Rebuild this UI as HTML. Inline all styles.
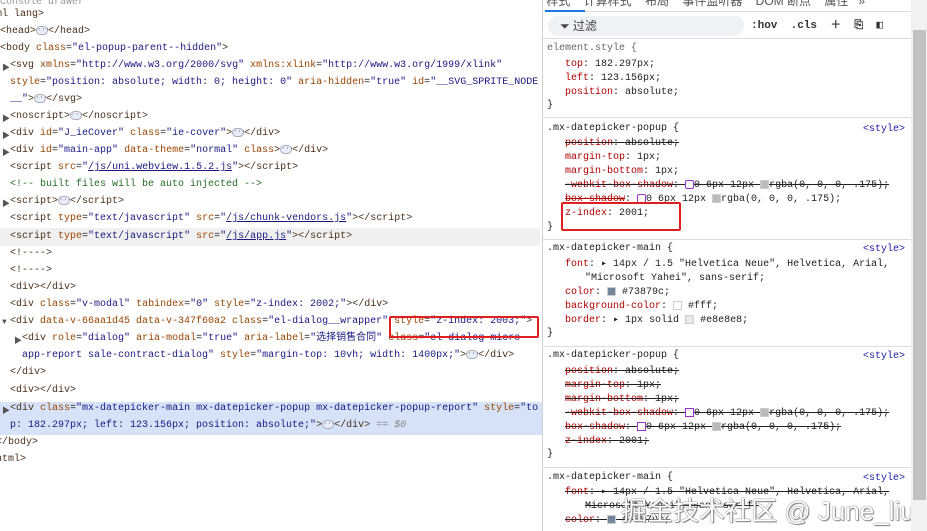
<!DOCTYPE html>
<html><head><meta charset="utf-8"><style>
*{margin:0;padding:0;box-sizing:border-box}
body{width:927px;height:531px;overflow:hidden;background:#fff;position:relative;font-family:"Liberation Mono","Noto Sans CJK SC",monospace;font-size:10px;color:#222}
.l{position:absolute;left:0;top:0;width:543px;height:531px;border-right:1px solid #d0d0d0}
.ln{position:absolute;height:17px;line-height:17px;white-space:pre}
.t{color:#4a2f18}.a{color:#994500}.v{color:#1a1a80}.c{color:#236e25}.u{color:#1a1a80;text-decoration:underline}
.tri{position:absolute;font-size:8px;color:#555}
.dots{display:inline-block;width:12px;height:9px;border:1px solid #aab;border-radius:5px;background:#e8eef8;vertical-align:middle;font-size:7px;line-height:6px;text-align:center;color:#557}
.r{position:absolute;left:543px;top:0;width:368px;height:531px}
.rl{position:absolute;left:4px;height:14px;line-height:14px;white-space:pre}
.p{color:#b00000}.s{text-decoration:line-through}
.sep{position:absolute;left:0;width:368px;height:1px;background:#ddd}
.src{position:absolute;right:6px;color:#1a1aa6}
.sw{display:inline-block;width:9px;height:9px;vertical-align:middle;border:1px solid #ccc}
.box{position:absolute;border:2px solid #e02020;border-radius:2px}
</style></head><body>
<div class="l">
<div class="ln" style="top:-6px;left:0;color:#999">Console drawer</div>
<div class="ln t" style="top:6px;left:-4px">ml lang&gt;</div>
<div class="ln t" style="top:23px;left:0">&lt;head&gt;<span class="dots">···</span>&lt;/head&gt;</div>
<div class="ln" style="top:40px;left:0"><span class="t">&lt;body </span><span class="a">class</span>=<span class="v">"el-popup-parent--hidden"</span><span class="t">&gt;</span></div>
<div class="tri" style="top:62px;left:2px">▶</div>
<div class="ln" style="top:57px;left:10px"><span class="t">&lt;svg </span><span class="a">xmlns</span>=<span class="v">"http://www.w3.org/2000/svg"</span> <span class="a">xmlns:xlink</span>=<span class="v">"http://www.w3.org/1999/xlink"</span></div>
<div class="ln" style="top:74px;left:10px"><span class="a">style</span>=<span class="v">"position: absolute; width: 0; height: 0"</span> <span class="a">aria-hidden</span>=<span class="v">"true"</span> <span class="a">id</span>=<span class="v">"__SVG_SPRITE_NODE</span></div>
<div class="ln" style="top:91px;left:10px"><span class="v">__"</span><span class="t">&gt;</span><span class="dots">···</span><span class="t">&lt;/svg&gt;</span></div>
<div class="tri" style="top:113px;left:2px">▶</div>
<div class="ln t" style="top:108px;left:10px">&lt;noscript&gt;<span class="dots">···</span>&lt;/noscript&gt;</div>
<div class="tri" style="top:130px;left:2px">▶</div>
<div class="ln" style="top:125px;left:10px"><span class="t">&lt;div </span><span class="a">id</span>=<span class="v">"J_ieCover"</span> <span class="a">class</span>=<span class="v">"ie-cover"</span><span class="t">&gt;</span><span class="dots">···</span><span class="t">&lt;/div&gt;</span></div>
<div class="tri" style="top:147px;left:2px">▶</div>
<div class="ln" style="top:142px;left:10px"><span class="t">&lt;div </span><span class="a">id</span>=<span class="v">"main-app"</span> <span class="a">data-theme</span>=<span class="v">"normal"</span> <span class="a">class</span><span class="t">&gt;</span><span class="dots">···</span><span class="t">&lt;/div&gt;</span></div>
<div class="ln" style="top:159px;left:10px"><span class="t">&lt;script </span><span class="a">src</span>=<span class="v">"<span class="u">/js/uni.webview.1.5.2.js</span>"</span><span class="t">&gt;&lt;/script&gt;</span></div>
<div class="ln c" style="top:176px;left:10px">&lt;!-- built files will be auto injected --&gt;</div>
<div class="tri" style="top:198px;left:2px">▶</div>
<div class="ln t" style="top:193px;left:10px">&lt;script&gt;<span class="dots">···</span>&lt;/script&gt;</div>
<div class="ln" style="top:210px;left:10px"><span class="t">&lt;script </span><span class="a">type</span>=<span class="v">"text/javascript"</span> <span class="a">src</span>=<span class="v">"<span class="u">/js/chunk-vendors.js</span>"</span><span class="t">&gt;&lt;/script&gt;</span></div>
<div style="position:absolute;top:228px;left:0;width:540px;height:18px;background:#f0f0f0;border-radius:0 4px 4px 0"></div>
<div class="ln" style="top:228px;left:10px"><span class="t">&lt;script </span><span class="a">type</span>=<span class="v">"text/javascript"</span> <span class="a">src</span>=<span class="v">"<span class="u">/js/app.js</span>"</span><span class="t">&gt;&lt;/script&gt;</span></div>
<div class="ln t" style="top:245px;left:10px">&lt;!----&gt;</div>
<div class="ln t" style="top:262px;left:10px">&lt;!----&gt;</div>
<div class="ln t" style="top:279px;left:10px">&lt;div&gt;&lt;/div&gt;</div>
<div class="ln" style="top:296px;left:10px"><span class="t">&lt;div </span><span class="a">class</span>=<span class="v">"v-modal"</span> <span class="a">tabindex</span>=<span class="v">"0"</span> <span class="a">style</span>=<span class="v">"z-index: 2002;"</span><span class="t">&gt;&lt;/div&gt;</span></div>
<div class="tri" style="top:318px;left:2px">▼</div>
<div class="ln" style="top:313px;left:10px"><span class="t">&lt;div </span><span class="a">data-v-66aa1d45 data-v-347f60a2 class</span>=<span class="v">"el-dialog__wrapper"</span> <span class="a">style</span>=<span class="v">"z-index: 2003;"</span><span class="t">&gt;</span></div>
<div class="tri" style="top:335px;left:14px">▶</div>
<div class="ln" style="top:330px;left:22px"><span class="t">&lt;div </span><span class="a">role</span>=<span class="v">"dialog"</span> <span class="a">aria-modal</span>=<span class="v">"true"</span> <span class="a">aria-label</span>=<span class="v">"选择销售合同"</span> <span class="a">class</span>=<span class="v">"el-dialog micro-</span></div>
<div class="ln" style="top:347px;left:22px"><span class="v">app-report sale-contract-dialog"</span> <span class="a">style</span>=<span class="v">"margin-top: 10vh; width: 1400px;"</span><span class="t">&gt;</span><span class="dots">···</span><span class="t">&lt;/div&gt;</span></div>
<div class="ln t" style="top:364px;left:10px">&lt;/div&gt;</div>
<div class="ln t" style="top:382px;left:10px">&lt;div&gt;&lt;/div&gt;</div>
<div style="position:absolute;top:402px;left:0;width:542px;height:33px;background:#d6e2f8"></div>
<div class="tri" style="top:405px;left:2px">▶</div>
<div class="ln" style="top:400px;left:10px"><span class="t">&lt;div </span><span class="a">class</span>=<span class="v">"mx-datepicker-main mx-datepicker-popup mx-datepicker-popup-report"</span> <span class="a">style</span>=<span class="v">"to</span></div>
<div class="ln" style="top:417px;left:10px"><span class="v">p: 182.297px; left: 123.156px; position: absolute;"</span><span class="t">&gt;</span><span class="dots">···</span><span class="t">&lt;/div&gt;</span> <span style="color:#888">== <i>$0</i></span></div>
<div class="ln t" style="top:434px;left:-4px">&lt;/body&gt;</div>
<div class="ln t" style="top:451px;left:-4px">ntml&gt;</div>
<div class="box" style="left:389px;top:316px;width:150px;height:22px"></div>
</div>
<div class="r">
<div style="position:absolute;top:0;left:0;width:384px;height:12px;background:#fff;border-bottom:1px solid #ddd;font-family:'Liberation Sans','Noto Sans CJK SC',sans-serif;font-size:12px;color:#555;white-space:pre;line-height:2px;overflow:hidden"> 样式    计算样式    布局    事件监听器    DOM 断点    属性   »</div>
<div style="position:absolute;top:10px;left:2px;width:40px;height:2px;background:#1a73e8"></div>
<div style="position:absolute;top:16px;left:5px;width:196px;height:20px;background:#eef1f5;border-radius:10px;font-family:'Liberation Sans','Noto Sans CJK SC',sans-serif;font-size:12px;line-height:20px;color:#444;padding-left:12px">⏷ 过滤</div>
<div style="position:absolute;top:17px;left:208px;font-size:11px;font-weight:bold;color:#333;white-space:pre;line-height:18px">:hov  .cls  ＋  ⎘  ◧</div>
<div class="sep" style="top:38px"></div>
<div class="rl" style="top:42px;color:#666">element.style {</div>
<div class="rl" style="top:58px;left:22px"><span class="p">top</span>: 182.297px;</div>
<div class="rl" style="top:72px;left:22px"><span class="p">left</span>: 123.156px;</div>
<div class="rl" style="top:86px;left:22px"><span class="p">position</span>: absolute;</div>
<div class="rl" style="top:99px">}</div>
<div class="sep" style="top:117px"></div>
<div class="rl" style="top:122px">.mx-datepicker-popup {</div><div class="src" style="top:124px">&lt;style&gt;</div>
<div class="rl s" style="top:137px;left:22px"><span class="p">position</span>: absolute;</div>
<div class="rl" style="top:151px;left:22px"><span class="p">margin-top</span>: 1px;</div>
<div class="rl" style="top:165px;left:22px"><span class="p">margin-bottom</span>: 1px;</div>
<div class="rl s" style="top:179px;left:22px"><span class="p">-webkit-box-shadow</span>: <span class="sw" style="border-color:#93c;border-radius:2px"></span>0 6px 12px <span class="sw" style="background:#bbb"></span>rgba(0, 0, 0, .175);</div>
<div class="rl" style="top:193px;left:22px"><span class="p s">box-shadow</span>: <span class="sw" style="border-color:#93c;border-radius:2px"></span>0 6px 12px <span class="sw" style="background:#bbb"></span>rgba(0, 0, 0, .175);</div>
<div class="rl" style="top:207px;left:22px"><span class="p">z-index</span>: 2001;</div>
<div class="rl" style="top:221px">}</div>
<div class="box" style="left:18px;top:202px;width:120px;height:29px"></div>
<div class="sep" style="top:239px"></div>
<div class="rl" style="top:242px">.mx-datepicker-main {</div><div class="src" style="top:244px">&lt;style&gt;</div>
<div class="rl" style="top:258px;left:22px"><span class="p">font</span>: ▸ 14px / 1.5 "Helvetica Neue", Helvetica, Arial,</div>
<div class="rl" style="top:272px;left:42px">"Microsoft Yahei", sans-serif;</div>
<div class="rl" style="top:286px;left:22px"><span class="p">color</span>: <span class="sw" style="background:#73879c"></span> #73879c;</div>
<div class="rl" style="top:300px;left:22px"><span class="p">background-color</span>: <span class="sw"></span> #fff;</div>
<div class="rl" style="top:314px;left:22px"><span class="p">border</span>: ▸ 1px solid <span class="sw" style="background:#e8e8e8"></span> #e8e8e8;</div>
<div class="rl" style="top:327px">}</div>
<div class="sep" style="top:346px"></div>
<div class="rl" style="top:349px">.mx-datepicker-popup {</div><div class="src" style="top:351px">&lt;style&gt;</div>
<div class="rl s" style="top:365px;left:22px"><span class="p">position</span>: absolute;</div>
<div class="rl s" style="top:379px;left:22px"><span class="p">margin-top</span>: 1px;</div>
<div class="rl s" style="top:393px;left:22px"><span class="p">margin-bottom</span>: 1px;</div>
<div class="rl s" style="top:407px;left:22px"><span class="p">-webkit-box-shadow</span>: <span class="sw" style="border-color:#93c"></span>0 6px 12px <span class="sw" style="background:#bbb"></span>rgba(0, 0, 0, .175);</div>
<div class="rl s" style="top:421px;left:22px"><span class="p">box-shadow</span>: <span class="sw" style="border-color:#93c"></span>0 6px 12px <span class="sw" style="background:#bbb"></span>rgba(0, 0, 0, .175);</div>
<div class="rl s" style="top:435px;left:22px"><span class="p">z-index</span>: 2001;</div>
<div class="rl" style="top:448px">}</div>
<div class="sep" style="top:467px"></div>
<div class="rl" style="top:471px">.mx-datepicker-main {</div><div class="src" style="top:473px">&lt;style&gt;</div>
<div class="rl s" style="top:486px;left:22px"><span class="p">font</span>: ▸ 14px / 1.5 "Helvetica Neue", Helvetica, Arial,</div>
<div class="rl s" style="top:500px;left:42px">Microsoft Yahei", sans-serif;</div>
<div class="rl s" style="top:514px;left:22px"><span class="p">color</span>: <span class="sw" style="background:#73879c"></span> #73879c;</div>
<div style="position:absolute;left:78px;top:491px;font-family:'Liberation Sans','Noto Sans CJK SC',sans-serif;font-size:26px;color:#fff;white-space:pre;text-shadow:0 0 1px #666,0 0 1px #666,1px 1px 1px #888">掘金技术社区 @ June_liu</div>
</div>
<div style="position:absolute;left:911px;top:0;width:16px;height:531px;background:#f1f1f1"></div>
<div style="position:absolute;left:913px;top:30px;width:13px;height:470px;background:#c1c1c1"></div>
</body></html>
